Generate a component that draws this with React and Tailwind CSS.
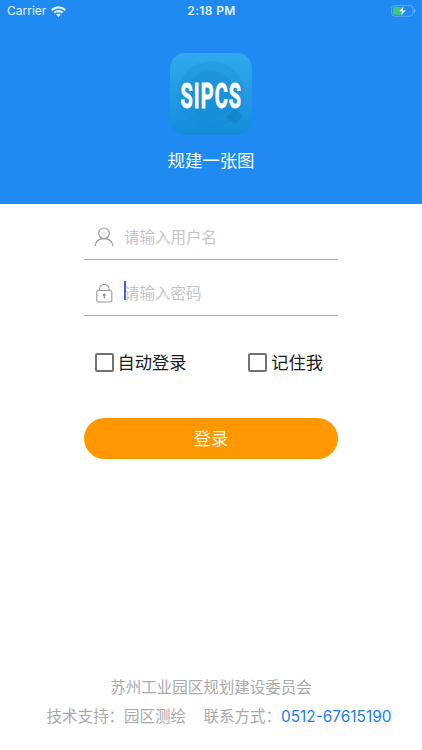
import React from 'react';

function StatusBar() {
  return (
    <div className="grid h-[22px] grid-cols-3 items-center pl-[7px] pr-[6px] text-[#e4f3ff]">
      <div className="flex items-center gap-[5px]">
        <span className="text-[12px] leading-[22px] tracking-[0px]">Carrier</span>
        <svg width="15" height="11" viewBox="0 0 15 11" fill="none" stroke="currentColor" strokeWidth="2.2">
          <path d="M.8 4.100a9.600 9.600 0 0 1 13.400 0" />
          <path d="M3.300 6.800a6 6 0 0 1 8.400 0" />
          <path d="M7.500 11 5.200 8.600a3.300 3.300 0 0 1 4.600 0Z" fill="currentColor" stroke="none" />
        </svg>
      </div>
      <span className="text-center text-[12px] font-semibold leading-[22px] tracking-[0.35px]">2:18 PM</span>
      <svg className="justify-self-end" width="25" height="12" viewBox="0 0 25 12">
        <rect x=".5" y=".6" width="21.500" height="10.600" rx="3" fill="none" stroke="#62acf5" />
        <rect x="2" y="2.100" width="9" height="7.600" rx="1.500" fill="#3bcb78" />
        <path d="M23.200 4v4c1.700-.7 1.700-3.300 0-4Z" fill="#7dbcfa" />
        <path d="M12.800 1.200 7.600 6.600h3.200L9.800 10.800 15.200 5.300h-3.300Z" fill="#fff" stroke="#1f8af1" strokeWidth=".4" />
      </svg>
    </div>
  );
}

function Logo() {
  return (
    <svg width="82" height="82" viewBox="0 0 82 82">
      <defs>
        <linearGradient id="tile" x1="0" y1="0" x2="0" y2="1">
          <stop offset="0" stopColor="#30a9ee" />
          <stop offset=".5" stopColor="#239be4" />
          <stop offset="1" stopColor="#148cdb" />
        </linearGradient>
      </defs>
      <rect width="82" height="82" rx="15" fill="url(#tile)" />
      <circle cx="41" cy="41.500" r="33.500" fill="#1687cf" opacity=".28" />
      <circle cx="41" cy="41.500" r="24" fill="#1687cf" opacity=".25" />
      <path d="m56 64 9-9 6.500 7q1.500 1.500 0 3l-5 5q-1.500 1.500-3 0Z" fill="#0f7cc2" opacity=".55" />
      <g transform="translate(10.500 55) scale(.56 1)">
        <text fontFamily="Roboto, 'Liberation Sans', sans-serif" fontSize="35.500" fontWeight="700" letterSpacing="2" fill="#fff" stroke="#fff" strokeWidth=".8">SIPCS</text>
      </g>
    </svg>
  );
}

function Field({ icon, placeholder, focused }) {
  return (
    <div className="flex h-14 items-center border-b border-[#a9a9a9] pl-[10px] pt-[10px]">
      {icon}
      <div className="relative ml-[10px] pt-[2px] text-[15.5px] leading-6 text-[#c5c5c9]">
        {focused && <i className="absolute left-0 top-[1px] h-[19px] w-[2px] bg-[#3e63e3]" />}
        {placeholder}
      </div>
    </div>
  );
}

function Check({ label }) {
  return (
    <div className="flex items-center gap-[4px] text-[17.3px] leading-6 text-[#1c1c1c]">
      <span className="h-[19px] w-[19px] rounded-[2px] border-2 border-[#737373]" />
      <span className="pt-px">{label}</span>
    </div>
  );
}

export default function App() {
  return (
    <div className="flex h-[750px] w-[422px] flex-col bg-white font-[Inter,'Noto_Sans_CJK_SC',sans-serif]">
      <header className="h-[204px] bg-[#1f8af1]">
        <StatusBar />
        <div className="flex flex-col items-center pt-[31px]">
          <Logo />
          <h1 className="mt-[14px] text-[17.4px] leading-6 text-[#f4faff]">规建一张图</h1>
        </div>
      </header>
      <main className="ml-[84px] w-[254px] flex-1">
        <Field
          placeholder="请输入用户名"
          icon={
            <svg width="20" height="20" viewBox="0 0 20 20" fill="none" stroke="#999" strokeWidth="1.2">
              <circle cx="10" cy="6.3" r="5.3" />
              <path d="M1 19c.7-4.7 4.3-7.4 9-7.4s8.300 2.700 9 7.400" />
            </svg>
          }
        />
        <Field
          placeholder="请输入密码"
          focused
          icon={
            <svg width="20" height="20" viewBox="0 0 20 20" fill="none" stroke="#999" strokeWidth="1.1">
              <rect x="2.800" y="7.500" width="15" height="11.500" rx="1.500" />
              <path d="M5.500 7.500V6.200a4.800 4.800 0 0 1 9.600 0v1.300" />
              <circle cx="10.300" cy="11.900" r="1.300" fill="#888" stroke="none" />
              <path d="M10.300 12.500v3" strokeWidth="1.300" />
            </svg>
          }
        />
        <div className="mt-[34px] flex items-center justify-between pl-[10.500px] pr-[15px]">
          <Check label="自动登录" />
          <Check label="记住我" />
        </div>
        <button className="mt-[43px] block h-[41px] w-full rounded-full bg-[#ff9800] text-[17.3px] leading-[41px] text-[#fff5e5]">登录</button>
      </main>
      <footer className="h-[76px] text-[15.5px] leading-[24px] text-[#aaa]">
        <p className="mt-[2px] text-center">苏州工业园区规划建设委员会</p>
        <div className="mt-[5px] flex whitespace-nowrap pl-[46.500px]">
          <span className="w-[157px]">技术支持：园区测绘</span>
          <span className="w-[77.500px]">联系方式：</span>
          <span className="text-[15.4px] text-[#1b80ee]">0512-67615190</span>
        </div>
      </footer>
    </div>
  );
}
